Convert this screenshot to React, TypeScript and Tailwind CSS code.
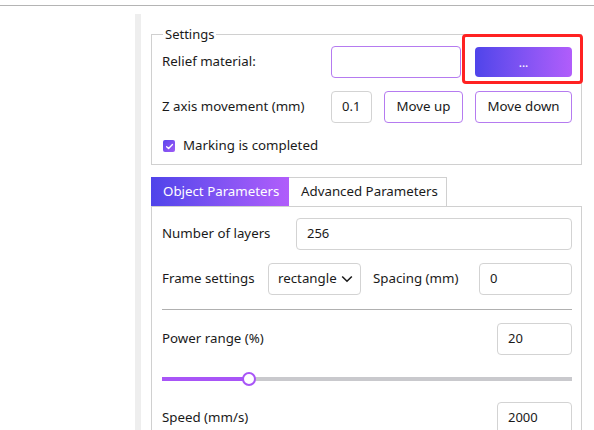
import React from "react";

const font = { fontFamily: '"Noto Sans", "Liberation Sans", sans-serif' };

function Field({ value, w, className = "" }: { value: string; w: string; className?: string }) {
  return (
    <div
      className={`h-[32px] ${w} border border-[#d3d3d3] rounded-[4px] flex items-center px-[10px] text-[13px] text-[#1a1a1a] ${className}`}
    >
      {value}
    </div>
  );
}

export default function App() {
  return (
    <div className="w-[594px] h-[430px] overflow-hidden bg-white text-[#1a1a1a]" style={font}>
      <div className="h-[5px]" />
      <div className="h-px bg-[#b4b4b4]" />
      <div className="flex pt-[8px]">
        <div className="w-[135px] shrink-0" />
        <div className="w-[6px] shrink-0 bg-[#eeeeee] h-[420px]" />
        <div className="ml-[10px] w-[431px] shrink-0">
          {/* Settings group */}
          <div className="relative mt-[20px] border border-[#d0d0d0] pt-[11px] pl-[10px] pr-[9px] pb-[8px]">
            <span className="absolute -top-[10px] left-[11px] bg-white px-[2px] text-[13px] leading-[18px]">
              Settings
            </span>
            <div className="flex items-center h-[32px]">
              <span className="flex-1 text-[13.3px]">Relief material:</span>
              <div className="w-[130px] h-[32px] border border-[#b57bf0] rounded-[4px]" />
              <div className="relative ml-[14px] w-[97px]">
                <div className="h-[30px] rounded-[4px] bg-linear-to-r from-[#4f44ea] to-[#b15dfb] flex items-center justify-center text-white text-[12px] pt-[2px]">
                  ...
                </div>
                <div className="absolute -left-[13px] -right-[11px] -top-[13px] -bottom-[7px] border-[3px] border-[#ff2222] rounded-[4px]" />
              </div>
            </div>
            <div className="flex items-center h-[32px] mt-[13px]">
              <span className="flex-1 text-[13.3px]">Z axis movement (mm)</span>
              <Field value="0.1" w="w-[41px]" />
              <div className="ml-[12px] w-[79px] h-[32px] border border-[#b57bf0] rounded-[4px] flex items-center justify-center text-[13.3px]">
                Move up
              </div>
              <div className="ml-[12px] w-[97px] h-[32px] border border-[#b57bf0] rounded-[4px] flex items-center justify-center text-[13.3px]">
                Move down
              </div>
            </div>
            <div className="flex items-center h-[20px] mt-[13px]">
              <div className="w-[12px] h-[12px] ml-[1px] rounded-[2px] bg-linear-to-br from-[#5a45ec] to-[#a05af6] flex items-center justify-center">
                <svg width="9" height="9" viewBox="0 0 10 10">
                  <path d="M1.8 5.2 L4 7.3 L8.3 2.8" stroke="white" strokeWidth="1.5" fill="none" strokeLinecap="round" strokeLinejoin="round" />
                </svg>
              </div>
              <span className="ml-[8px] text-[13.3px]">Marking is completed</span>
            </div>
          </div>

          {/* Tabs */}
          <div className="flex mt-[12px] h-[29px]">
            <div className="w-[138px] bg-linear-to-r from-[#4f44ea] to-[#b15dfb] text-white text-[13.3px] flex items-center pl-[12px]">
              Object Parameters
            </div>
            <div className="w-[158px] border-t border-r border-[#d0d0d0] text-[13.3px] flex items-center pl-[12px]">
              Advanced Parameters
            </div>
          </div>
          <div className="border border-[#d0d0d0] pt-[11px] pl-[10px] pr-[9px] h-[300px]">
            <div className="flex items-center h-[32px]">
              <span className="w-[134px] text-[13.3px]">Number of layers</span>
              <Field value="256" w="flex-1" />
            </div>
            <div className="flex items-center h-[32px] mt-[13px]">
              <span className="w-[106px] text-[13.3px]">Frame settings</span>
              <div className="w-[93px] h-[32px] border border-[#d3d3d3] rounded-[4px] flex items-center pl-[9px] pr-[7px] text-[13.3px]">
                <span className="flex-1">rectangle</span>
                <svg width="12" height="8" viewBox="0 0 12 8">
                  <path d="M1.2 1.5 L6 6.2 L10.8 1.5" stroke="#1a1a1a" strokeWidth="1.6" fill="none" />
                </svg>
              </div>
              <span className="ml-[12px] flex-1 text-[13.3px]">Spacing (mm)</span>
              <Field value="0" w="w-[93px]" />
            </div>
            <div className="h-px bg-[#b0b0b0] mt-[14px]" />
            <div className="flex items-center h-[32px] mt-[13px]">
              <span className="flex-1 text-[13.3px]">Power range (%)</span>
              <Field value="20" w="w-[75px]" />
            </div>
            <div className="relative h-[14px] mt-[17px] flex items-center">
              <div className="h-[4px] w-full bg-[#c9c9cd] flex">
                <div className="h-full w-[87px] bg-[#a855f7]" />
              </div>
              <div className="absolute left-[80px] top-0 w-[14px] h-[14px] rounded-full bg-white border-2 border-[#a855f7]" />
            </div>
            <div className="flex items-center h-[32px] mt-[16px]">
              <span className="flex-1 text-[13.3px]">Speed (mm/s)</span>
              <Field value="2000" w="w-[75px]" />
            </div>
          </div>
        </div>
      </div>
    </div>
  );
}
